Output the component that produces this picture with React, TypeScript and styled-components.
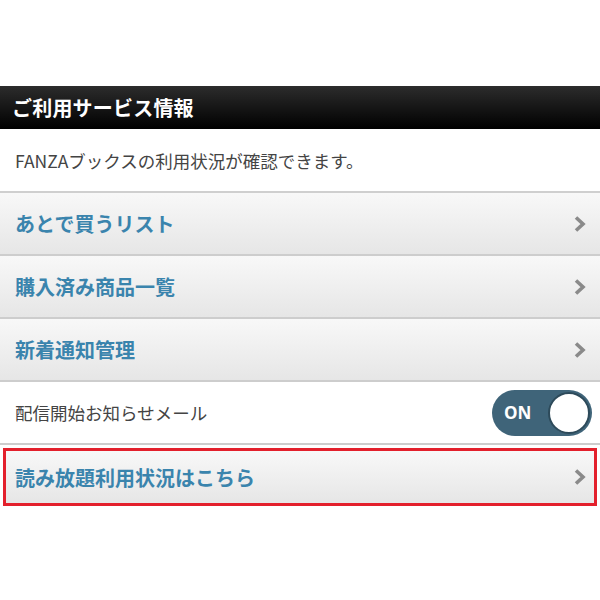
import * as React from 'react';
import styled, { createGlobalStyle } from 'styled-components';

const GlobalStyle = createGlobalStyle`
	html, body {
		margin: 0;
		padding: 0;
		background: #fff;
	}
	body {
		font-family: "Noto Sans CJK JP", "Noto Sans", sans-serif;
	}
`;

const Page = styled.div`
	width: 600px;
	padding-top: 86px;
`;

const Heading = styled.h2`
	margin: 0;
	height: 43px;
	display: flex;
	align-items: center;
	padding: 0 12px;
	background: linear-gradient(#2c2c2c, #000);
	color: #fff;
	font-size: 20px;
	font-weight: 700;
	letter-spacing: 0.2px;
`;

const Description = styled.p`
	margin: 0;
	height: 62px;
	display: flex;
	align-items: center;
	padding: 0 15px;
	font-size: 17.5px;
	color: #444;
	border-bottom: 2px solid #cfcfcf;
`;

const List = styled.ul`
	list-style: none;
	margin: 0;
	padding: 0;
`;

const LinkRow = styled.li<{ $highlight?: boolean }>`
	height: ${p => (p.$highlight ? '52px' : '61px')};
	display: flex;
	align-items: center;
	justify-content: space-between;
	padding: 0 ${p => (p.$highlight ? '7px' : '13px')} 0 ${p => (p.$highlight ? '9px' : '15px')};
	background: linear-gradient(#f8f8f8, #e6e6e6);
	border-bottom: 2px solid #cdcdcd;
	${p => p.$highlight && `
		margin: 3px 3px 0;
		border: 3px solid #e3202c;
	`}
`;

const LinkLabel = styled.span`
	color: #3a84ad;
	font-size: 20px;
	font-weight: 700;
`;

const ToggleRow = styled.li`
	height: 61px;
	display: flex;
	align-items: center;
	justify-content: space-between;
	padding: 0 8px 0 15px;
	background: #fff;
	border-bottom: 2px solid #cdcdcd;
`;

const ToggleLabel = styled.span`
	font-size: 17.5px;
	color: #444;
`;

const Switch = styled.div`
	width: 100px;
	height: 46px;
	border-radius: 23px;
	background: #3f6479;
	display: flex;
	align-items: center;
	justify-content: space-between;
	padding: 0 2px 0 12px;
	box-sizing: border-box;
`;

const SwitchText = styled.span`
	color: #fff;
	font-family: "Open Sans", "Liberation Sans", sans-serif;
	font-weight: 700;
	font-size: 17px;
`;

const Knob = styled.span`
	width: 38px;
	height: 38px;
	border-radius: 50%;
	background: #fff;
	border: 2px solid #2d4a5a;
`;

const Chevron = () => (
	<svg width="14" height="18" viewBox="0 0 14 18">
		<path d="M3 2.5 L10 9 L3 15.5" fill="none" stroke="#8a8a8a" strokeWidth="3.6" />
	</svg>
);

const links = ['あとで買うリスト', '購入済み商品一覧', '新着通知管理'];

const App: React.FC = () => (
	<Page>
		<GlobalStyle />
		<Heading>ご利用サービス情報</Heading>
		<Description>FANZAブックスの利用状況が確認できます。</Description>
		<List>
			{links.map(label => (
				<LinkRow key={label}>
					<LinkLabel>{label}</LinkLabel>
					<Chevron />
				</LinkRow>
			))}
			<ToggleRow>
				<ToggleLabel>配信開始お知らせメール</ToggleLabel>
				<Switch>
					<SwitchText>ON</SwitchText>
					<Knob />
				</Switch>
			</ToggleRow>
			<LinkRow $highlight>
				<LinkLabel>読み放題利用状況はこちら</LinkLabel>
				<Chevron />
			</LinkRow>
		</List>
	</Page>
);

export default App;
